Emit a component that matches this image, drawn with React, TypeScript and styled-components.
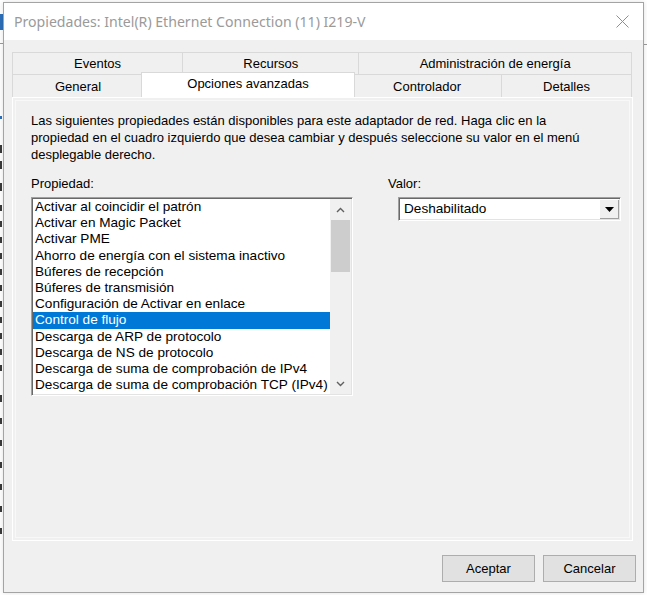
import React from "react";
import styled, { createGlobalStyle } from "styled-components";

const Global = createGlobalStyle`
  html, body { margin: 0; padding: 0; background: #ffffff; }
  body { width: 647px; height: 595px; overflow: hidden; font-family: "Liberation Sans", Arial, sans-serif; }
`;

const Desktop = styled.div`
  position: relative;
  width: 647px;
  height: 595px;
  overflow: hidden;
  background: #ffffff;
`;

const BackColumn = styled.div`
  position: absolute;
  left: 0;
  top: 0;
  width: 3px;
  height: 595px;
  display: flex;
  flex-direction: column;
  align-items: flex-start;
`;

const BackIcon = styled.div`
  margin-top: 14px;
  width: 3px;
  height: 16px;
  background: #2d6fb8;
`;

const BackRule = styled.div`
  margin-top: 13px;
  width: 3px;
  height: 1px;
  background: #9a9a9a;
`;

const BackMark = styled.div<{ $gap: number; $h: number; $blue?: boolean }>`
  margin-top: ${(p) => p.$gap}px;
  width: 2px;
  height: ${(p) => p.$h}px;
  background: ${(p) => (p.$blue ? "#2d6fb8" : "#3a3a3a")};
`;

const RightEdgeRule = styled.div`
  position: absolute;
  right: 0;
  top: 44px;
  width: 4px;
  height: 1px;
  background: #9a9a9a;
`;

const Dialog = styled.div`
  position: absolute;
  left: 3px;
  top: 2px;
  width: 641px;
  height: 591px;
  box-sizing: border-box;
  border: 1px solid #a4a4a4;
  background: #f0f0f0;
  display: flex;
  flex-direction: column;
  box-shadow: 0 0 5px rgba(0, 0, 0, 0.12);
`;

const TitleBar = styled.div`
  height: 37px;
  flex: none;
  background: #ffffff;
  display: flex;
  align-items: center;
  justify-content: space-between;
  padding: 0 14px 0 10px;
  font-family: "Noto Sans", "Open Sans", sans-serif;
  font-size: 14.1px;
  color: #9a9a9a;
`;

const Title = styled.span`
  white-space: nowrap;
  margin-top: 0;
`;

const CloseGlyph = styled.svg`
  width: 13px;
  height: 13px;
  display: block;
  margin-top: -1px;
`;

const Body = styled.div`
  flex: 1;
  display: flex;
  flex-direction: column;
  padding: 12px 7px 0 8px;
`;

const TabArea = styled.div`
  display: flex;
  flex-direction: column;
  margin-right: 3px;
`;

const TabRow = styled.div<{ $h: number }>`
  display: flex;
  height: ${(p) => p.$h}px;
  margin: 0 1px 0 1px;
`;

const Tab = styled.div<{ $w: number; $active?: boolean }>`
  flex: ${(p) => p.$w} 1 0;
  box-sizing: border-box;
  display: flex;
  align-items: center;
  justify-content: center;
  border: 1px solid #d9d9d9;
  border-bottom: none;
  margin-left: -1px;
  background: ${(p) => (p.$active ? "#ffffff" : "#f0f0f0")};
  font-size: 13px;
  color: #000;
  white-space: nowrap;
  padding-top: 0;
  ${(p) =>
    p.$active
      ? `
    margin: -2px -2px 0 -3px;
    z-index: 2;
    padding-bottom: 4px;
  `
      : ""}
`;

const Panel = styled.div`
  height: 444px;
  box-sizing: border-box;
  border: 1px solid #ffffff;
  box-shadow: inset 0 0 0 2px #f0f0f0, inset 0 0 0 3px #f8f8f8;
  background: #f0f0f0;
  padding: 14px 8px 0 18px;
  position: relative;
  z-index: 1;
`;

const Description = styled.p`
  margin: 0;
  font-size: 13px;
  line-height: 17px;
  color: #000;
  width: 564px;
`;

const Columns = styled.div`
  display: flex;
  gap: 35px;
  margin-top: 12px;
`;

const LeftColumn = styled.div`
  width: 322px;
  flex: none;
  display: flex;
  flex-direction: column;
`;

const RightColumn = styled.div`
  flex: 1;
  display: flex;
  flex-direction: column;
`;

const FieldLabel = styled.div`
  font-size: 13px;
  line-height: 17px;
  height: 17px;
  margin-bottom: 5px;
  color: #000;
`;

const Sunken = styled.div`
  box-sizing: border-box;
  border: 1px solid;
  border-color: #a0a0a0 #ffffff #ffffff #a0a0a0;
  box-shadow: inset 1px 1px 0 #696969, inset -1px -1px 0 #e3e3e3;
  background: #ffffff;
  padding: 1px;
`;

const ListBox = styled(Sunken)`
  height: 199px;
  display: flex;
`;

const Items = styled.div`
  flex: 1;
  overflow: hidden;
`;

const Item = styled.div<{ $selected?: boolean }>`
  height: 16.2px;
  line-height: 16.2px;
  padding-left: 2px;
  font-size: 13.6px;
  white-space: nowrap;
  color: ${(p) => (p.$selected ? "#ffffff" : "#000000")};
  background: ${(p) => (p.$selected ? "#0078d7" : "transparent")};
`;

const ScrollBar = styled.div`
  width: 21px;
  flex: none;
  background: #f0f0f0;
  display: flex;
  flex-direction: column;
`;

const ScrollButton = styled.div`
  height: 21px;
  display: flex;
  align-items: center;
  justify-content: center;
`;

const Thumb = styled.div`
  height: 52px;
  margin: 0 1px;
  background: #cdcdcd;
`;

const Track = styled.div`
  flex: 1;
`;

const Combo = styled(Sunken)`
  margin-left: 10px;
  width: 223px;
  height: 24px;
  display: flex;
  align-items: stretch;
`;

const ComboText = styled.div`
  flex: 1;
  padding-left: 4px;
  font-size: 13.6px;
  line-height: 20px;
  color: #000;
`;

const ComboButton = styled.div`
  width: 20px;
  display: flex;
  align-items: center;
  justify-content: center;
  background: #f0f0f0;
  box-shadow: inset 1px 1px 0 #ffffff, inset -1px -1px 0 #a0a0a0;
`;

const Footer = styled.div`
  display: flex;
  justify-content: flex-end;
  gap: 8px;
  margin-top: 14px;
`;

const Button = styled.button`
  width: 93px;
  height: 27px;
  box-sizing: border-box;
  border: 1px solid #adadad;
  background: #e1e1e1;
  font-family: "Liberation Sans", Arial, sans-serif;
  font-size: 13px;
  color: #000;
  padding: 0;
`;

const Chevron = ({ up }: { up?: boolean }) => (
  <svg width="9" height="6" viewBox="0 0 9 6">
    <path
      d={up ? "M1 5 L4.5 1.5 L8 5" : "M1 1 L4.5 4.5 L8 1"}
      fill="none"
      stroke="#606060"
      strokeWidth="1.4"
    />
  </svg>
);

const items = [
  "Activar al coincidir el patrón",
  "Activar en Magic Packet",
  "Activar PME",
  "Ahorro de energía con el sistema inactivo",
  "Búferes de recepción",
  "Búferes de transmisión",
  "Configuración de Activar en enlace",
  "Control de flujo",
  "Descarga de ARP de protocolo",
  "Descarga de NS de protocolo",
  "Descarga de suma de comprobación de IPv4",
  "Descarga de suma de comprobación TCP (IPv4)",
];

const backMarks: [number, number, boolean?][] = [
  [72, 3, true],
  [26, 8],
  [8, 8],
  [14, 8],
  [14, 6],
  [10, 6],
  [10, 6],
  [10, 6],
  [10, 6],
  [10, 6],
  [10, 6],
  [10, 6],
  [10, 6],
  [10, 6],
  [10, 6],
  [24, 7],
  [16, 6],
  [16, 6],
  [16, 6],
  [16, 6],
  [16, 6],
  [16, 6],
];

export default function App() {
  return (
    <>
      <Global />
      <Desktop>
        <BackColumn>
          <BackIcon />
          <BackRule />
          {backMarks.map(([gap, h, blue], i) => (
            <BackMark key={i} $gap={gap} $h={h} $blue={blue} />
          ))}
        </BackColumn>
        <RightEdgeRule />
        <Dialog>
          <TitleBar>
            <Title>Propiedades: Intel(R) Ethernet Connection (11) I219-V</Title>
            <CloseGlyph viewBox="0 0 13 13">
              <path d="M0.5 0.5 L12.5 12.5 M12.5 0.5 L0.5 12.5" stroke="#8f8f8f" strokeWidth="1" fill="none" />
            </CloseGlyph>
          </TitleBar>
          <Body>
            <TabArea>
              <TabRow $h={22}>
                <Tab $w={170}>Eventos</Tab>
                <Tab $w={176}>Recursos</Tab>
                <Tab $w={273}>Administración de energía</Tab>
              </TabRow>
              <TabRow $h={23}>
                <Tab $w={130}>General</Tab>
                <Tab $w={212} $active>
                  Opciones avanzadas
                </Tab>
                <Tab $w={148}>Controlador</Tab>
                <Tab $w={129}>Detalles</Tab>
              </TabRow>
              <Panel>
                <Description>
                  Las siguientes propiedades están disponibles para este adaptador de red. Haga clic en la
                  propiedad en el cuadro izquierdo que desea cambiar y después seleccione su valor en el menú
                  desplegable derecho.
                </Description>
                <Columns>
                  <LeftColumn>
                    <FieldLabel>Propiedad:</FieldLabel>
                    <ListBox>
                      <Items>
                        {items.map((t) => (
                          <Item key={t} $selected={t === "Control de flujo"}>
                            {t}
                          </Item>
                        ))}
                      </Items>
                      <ScrollBar>
                        <ScrollButton>
                          <Chevron up />
                        </ScrollButton>
                        <Thumb />
                        <Track />
                        <ScrollButton>
                          <Chevron />
                        </ScrollButton>
                      </ScrollBar>
                    </ListBox>
                  </LeftColumn>
                  <RightColumn>
                    <FieldLabel>Valor:</FieldLabel>
                    <Combo>
                      <ComboText>Deshabilitado</ComboText>
                      <ComboButton>
                        <svg width="9" height="5" viewBox="0 0 9 5">
                          <path d="M0 0 H9 L4.5 5 Z" fill="#000" />
                        </svg>
                      </ComboButton>
                    </Combo>
                  </RightColumn>
                </Columns>
              </Panel>
            </TabArea>
            <Footer>
              <Button>Aceptar</Button>
              <Button>Cancelar</Button>
            </Footer>
          </Body>
        </Dialog>
      </Desktop>
    </>
  );
}
